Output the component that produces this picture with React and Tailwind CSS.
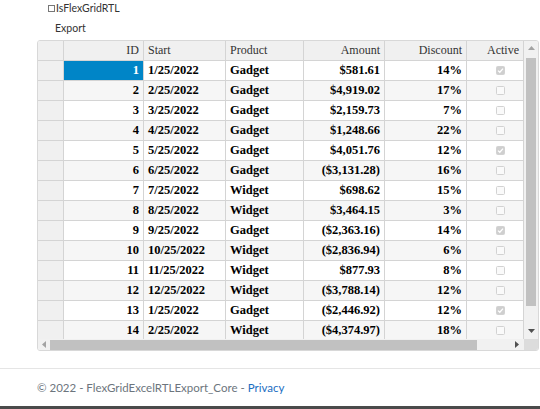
import React from 'react';

const rows = [
  [1, '1/25/2022', 'Gadget', '$581.61', '14%', true],
  [2, '2/25/2022', 'Gadget', '$4,919.02', '17%', false],
  [3, '3/25/2022', 'Gadget', '$2,159.73', '7%', false],
  [4, '4/25/2022', 'Gadget', '$1,248.66', '22%', false],
  [5, '5/25/2022', 'Gadget', '$4,051.76', '12%', true],
  [6, '6/25/2022', 'Gadget', '($3,131.28)', '16%', false],
  [7, '7/25/2022', 'Widget', '$698.62', '15%', false],
  [8, '8/25/2022', 'Widget', '$3,464.15', '3%', false],
  [9, '9/25/2022', 'Gadget', '($2,363.16)', '14%', true],
  [10, '10/25/2022', 'Widget', '($2,836.94)', '6%', false],
  [11, '11/25/2022', 'Widget', '$877.93', '8%', false],
  [12, '12/25/2022', 'Widget', '($3,788.14)', '12%', false],
  [13, '1/25/2022', 'Gadget', '($2,446.92)', '12%', true],
  [14, '2/25/2022', 'Widget', '($4,374.97)', '18%', false],
];

const cell = 'h-[20px] box-border border-r border-b border-[#d4d4d4] px-[4px] flex items-center overflow-hidden whitespace-nowrap';

function Check({ checked }) {
  return (
    <svg width="9" height="9" viewBox="0 0 9 9">
      <rect x="0.5" y="0.5" width="8" height="8" rx="1" fill={checked ? '#cfcfcf' : '#fafafa'} stroke="#d2d2d2" />
      {checked && <path d="M2 4.6 L3.8 6.3 L7 2.6" stroke="#fff" strokeWidth="1.3" fill="none" />}
    </svg>
  );
}

function Header() {
  return (
    <div className="flex font-['Liberation_Serif',serif] text-[12px] text-[#333] bg-[#f0f0f0]">
      <div className={`${cell} w-[26px]`} />
      <div className={`${cell} w-[80px] justify-end`}>ID</div>
      <div className={`${cell} w-[82px]`}>Start</div>
      <div className={`${cell} w-[78px]`}>Product</div>
      <div className={`${cell} w-[81px] justify-end`}>Amount</div>
      <div className={`${cell} w-[82px] justify-end`}>Discount</div>
      <div className={`${cell} w-[57px] justify-end`}>Active</div>
    </div>
  );
}

function Row({ r, i }) {
  const alt = i % 2 === 1 ? 'bg-[#f6f6f6]' : 'bg-white';
  const sel = i === 0;
  return (
    <div className="flex font-['Liberation_Serif',serif] font-bold text-[12.5px] text-black">
      <div className={`${cell} w-[26px] bg-[#f0f0f0]`} />
      <div className={`${cell} w-[80px] justify-end ${sel ? 'bg-[#0085c7] text-white' : alt}`}>{r[0]}</div>
      <div className={`${cell} w-[82px] ${alt}`}>{r[1]}</div>
      <div className={`${cell} w-[78px] ${alt}`}>{r[2]}</div>
      <div className={`${cell} w-[81px] justify-end ${alt}`}>{r[3]}</div>
      <div className={`${cell} w-[82px] justify-end ${alt}`}>{r[4]}</div>
      <div className={`${cell} w-[57px] justify-center pl-[14px] ${alt}`}>
        <Check checked={r[5]} />
      </div>
    </div>
  );
}

export default function App() {
  return (
    <div className="w-[540px] h-[409px] bg-white flex flex-col overflow-hidden font-['Lato','Open_Sans',sans-serif]">
      <div className="pl-[48px] h-[17px] flex items-center text-[10.5px] text-[#333]">
        <span className="w-[7px] h-[7px] border border-[#777] mr-[1px] bg-white" />
        <span>IsFlexGridRTL</span>
      </div>
      <div className="pl-[55px] h-[23px] flex items-center text-[10.5px] text-[#333]">Export</div>

      <div className="ml-[37px] w-[502px] border border-[#d8d8d8] rounded-[3px] overflow-hidden">
        <div className="flex">
          <div className="w-[486px] h-[298px] overflow-hidden">
            <Header />
            {rows.map((r, i) => (
              <Row key={r[0]} r={r} i={i} />
            ))}
          </div>
          <div className="w-[14px] h-[298px] bg-[#f1f1f1] flex flex-col items-center">
            <div className="h-[14px] flex items-center justify-center">
              <svg width="7" height="4" viewBox="0 0 7 4"><path d="M0 4 L3.5 0 L7 4 Z" fill="#a3a3a3" /></svg>
            </div>
            <div className="w-[10px] h-[248px] bg-[#c1c1c1] mt-[3px]" />
            <div className="flex-1 flex items-end justify-center pb-[6px]">
              <svg width="7" height="4" viewBox="0 0 7 4"><path d="M0 0 L3.5 4 L7 0 Z" fill="#505050" /></svg>
            </div>
          </div>
        </div>
        <div className="flex h-[12px]">
          <div className="w-[486px] bg-[#f1f1f1] flex items-center">
            <div className="w-[12px] flex justify-center">
              <svg width="4" height="7" viewBox="0 0 4 7"><path d="M4 0 L0 3.5 L4 7 Z" fill="#a3a3a3" /></svg>
            </div>
            <div className="w-[427px] h-[10px] bg-[#c1c1c1]" />
            <div className="flex-1 flex justify-end pr-[5px]">
              <svg width="4" height="7" viewBox="0 0 4 7"><path d="M0 0 L4 3.5 L0 7 Z" fill="#505050" /></svg>
            </div>
          </div>
          <div className="w-[14px] bg-[#dcdcdc]" />
        </div>
      </div>

      <div className="mt-[17px] border-t border-[#e5e5e5] h-[38px] flex items-center pl-[37px] text-[11.5px] text-[#6c757d]">
        <span>© 2022 - FlexGridExcelRTLExport_Core - </span>
        <span className="text-[#1b6ec2] ml-[3px]">Privacy</span>
      </div>
      <div className="flex-1" />
      <div className="h-[3px] bg-[#4a4a4a]" />
    </div>
  );
}
